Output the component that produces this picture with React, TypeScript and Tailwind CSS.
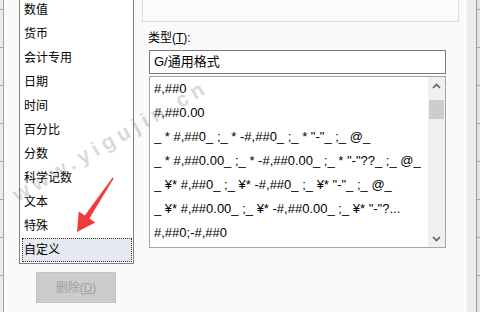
import React from "react";

const categories = [
  "数值",
  "货币",
  "会计专用",
  "日期",
  "时间",
  "百分比",
  "分数",
  "科学记数",
  "文本",
  "特殊",
  "自定义",
];

const formats = [
  "#,##0",
  "#,##0.00",
  '_ * #,##0_ ;_ * -#,##0_ ;_ * "-"_ ;_ @_',
  '_ * #,##0.00_ ;_ * -#,##0.00_ ;_ * "-"??_ ;_ @_',
  '_ ¥* #,##0_ ;_ ¥* -#,##0_ ;_ ¥* "-"_ ;_ @_',
  '_ ¥* #,##0.00_ ;_ ¥* -#,##0.00_ ;_ ¥* "-"?...',
  "#,##0;-#,##0",
];

const font = "font-['Liberation_Sans','Noto_Sans_CJK_SC',sans-serif]";

// spreadsheet column showing behind the dialog
const SheetStrip = ({ className }: { className: string }) => (
  <div className={`flex flex-col shrink-0 ${className}`}>
    <div className="h-[10px] border-b border-[#a8a8a8] shrink-0" />
    {Array.from({ length: 8 }).map((_, i) => (
      <div key={i} className="h-[38px] border-b border-[#a8a8a8] shrink-0" />
    ))}
  </div>
);

const Chevron = ({ up }: { up?: boolean }) => (
  <svg width="9" height="6" viewBox="0 0 9 6">
    <path
      d={up ? "M1 5 L4.5 1.5 L8 5" : "M1 1 L4.5 4.5 L8 1"}
      fill="none"
      stroke="#606060"
      strokeWidth="1.6"
    />
  </svg>
);

export default function App() {
  return (
    <div className={`relative flex w-[480px] h-[312px] overflow-hidden bg-[#fafafa] ${font}`}>
      <SheetStrip className="w-[4px] bg-[#ececec] border-r border-[#a0a0a0]" />

      <div className="flex flex-1">
        {/* category list */}
        <div className="flex flex-col ml-[15px] w-[115px] shrink-0">
          <div className="-mt-[4px] bg-white border border-[#828282] pt-[1px] pb-[1px] flex flex-col">
            {categories.map((c, i) => {
              const selected = i === categories.length - 1;
              return (
                <div
                  key={c}
                  className={`h-[24px] flex items-center ml-[2px] mr-[1px] pl-[1px] text-[12px] text-black border ${
                    selected
                      ? "border-dotted border-[#333] bg-[#e5e9f0]"
                      : "border-transparent"
                  }`}
                >
                  {c}
                </div>
              );
            })}
          </div>
          <div className="mt-[8px] ml-[17px] w-[80px] h-[31px] bg-[#cccccc] border border-[#c4c4c4] flex items-center justify-center text-[12px] text-[#a0a0a0]">
            删除(<span className="underline">D</span>)
          </div>
        </div>

        {/* right panel */}
        <div className="flex flex-col ml-[8px] w-[317px] shrink-0">
          <div className="h-[22px] bg-[#fcfcfc] border-x border-b border-[#dcdcdc]" />
          <div className="mt-[8px] h-[16px] pl-[6px] flex items-center text-[12px] text-black">
            类型(<span className="underline">T</span>):
          </div>
          <div className="mt-[4px] ml-[7px] w-[297px] h-[24px] bg-white border border-[#7a7a7a] flex items-center pl-[4px] text-[13px] text-black">
            G/通用格式
          </div>
          <div className="mt-[2px] ml-[7px] w-[297px] h-[172px] bg-white border border-[#a5a5a5] flex">
            <div className="flex-1 flex flex-col pl-[4px] min-w-0">
              {formats.map((f) => (
                <div
                  key={f}
                  className="h-[24px] shrink-0 flex items-center text-[13px] text-black whitespace-pre overflow-hidden"
                >
                  {f}
                </div>
              ))}
            </div>
            <div className="w-[17px] bg-[#f0f0f0] flex flex-col items-stretch shrink-0">
              <div className="h-[17px] flex items-center justify-center">
                <Chevron up />
              </div>
              <div className="mt-[6px] mx-[1px] h-[19px] bg-[#cdcdcd]" />
              <div className="flex-1" />
              <div className="h-[17px] flex items-center justify-center">
                <Chevron />
              </div>
            </div>
          </div>
        </div>
      </div>

      <div className="w-[9px] bg-[#ececec] shrink-0" />
      <SheetStrip className="w-[4px] bg-[#e2e2e2] border-l border-[#9d9d9d]" />

      {/* watermark */}
      <div className="absolute left-[22px] top-[178px] origin-bottom-left -rotate-[30deg] text-[21px] font-bold tracking-[5px] text-[rgba(120,120,120,0.3)] font-['Liberation_Sans',sans-serif] pointer-events-none whitespace-nowrap">
        www.yigujin.cn
      </div>

      {/* red arrow */}
      <svg className="absolute inset-0 pointer-events-none" width="480" height="312">
        <polygon
          points="112.6,177.6 113.6,178.4 89.4,218.6 95.3,222.5 77,232 78.7,211.5 84.8,215.4"
          fill="#f23a3a"
        />
      </svg>
    </div>
  );
}
